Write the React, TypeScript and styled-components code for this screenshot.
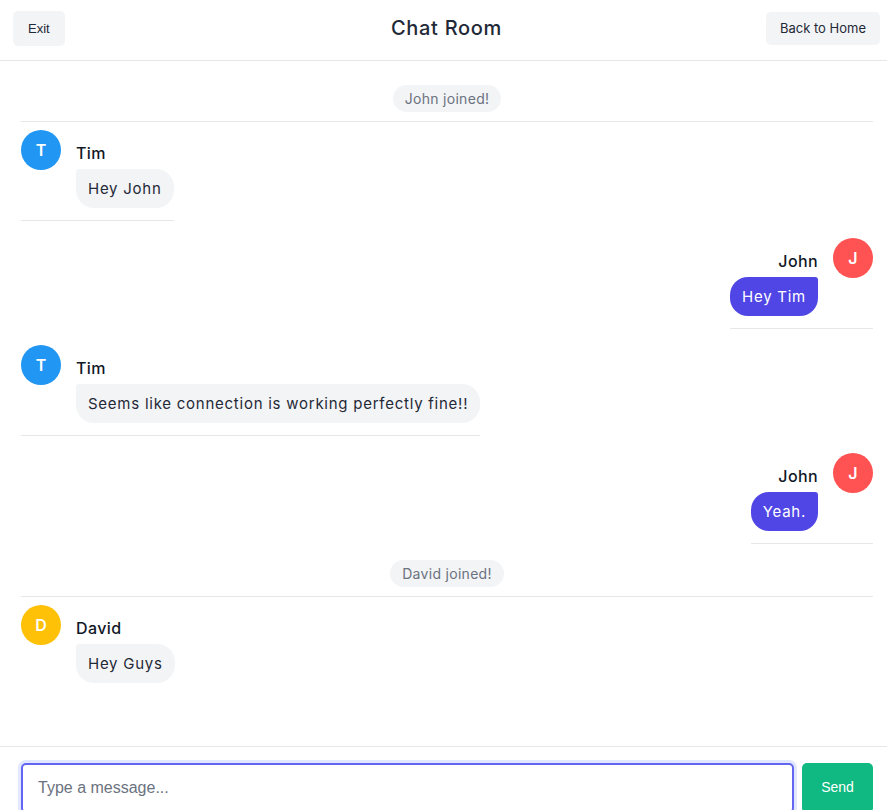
import React, { useEffect, useRef } from "react";
import styled, { createGlobalStyle } from "styled-components";

const Global = createGlobalStyle`
  html, body { margin: 0; padding: 0; background: #fff; overflow: hidden; }
  * { box-sizing: border-box; }
`;

const FONT = `"Inter", "Noto Sans", sans-serif`;

const Page = styled.div`
  height: 100vh;
  display: flex;
  flex-direction: column;
  font-family: ${FONT};
  color: #1f2937;
  overflow: hidden;
`;

const Header = styled.header`
  height: 61px;
  flex: none;
  display: grid;
  grid-template-columns: 1fr auto 1fr;
  align-items: center;
  padding: 0 7px 0 13px;
  border-bottom: 1px solid #e5e7eb;
`;

const HeaderButton = styled.button<{ $mono?: boolean; $align: "start" | "end" }>`
  justify-self: ${(p) => p.$align};
  border: none;
  background: #f3f4f6;
  border-radius: 5px;
  color: #1f2937;
  cursor: pointer;
  font-family: ${(p) => (p.$mono ? `"Liberation Sans", Arial, sans-serif` : FONT)};
  font-size: 13px;
  letter-spacing: 0;
  height: ${(p) => (p.$mono ? "35px" : "33px")};
  padding: 0 ${(p) => (p.$mono ? "15px" : "14px")};
  margin-top: ${(p) => (p.$mono ? "-3px" : "-4px")};
`;

const Title = styled.h1`
  margin: 0 0 4px;
  font-size: 20px;
  font-weight: 500;
  letter-spacing: 0.7px;
  color: #1f2937;
`;

const Messages = styled.main`
  height: 685px;
  flex: none;
  padding: 16px 14px 0 21px;
  display: flex;
  flex-direction: column;
  overflow: hidden;
`;

const SystemRow = styled.div`
  display: flex;
  justify-content: center;
  padding: 8px 0 9px;
  border-bottom: 1px solid #e5e7eb;
`;

const SystemPill = styled.span`
  background: #f3f4f6;
  color: #6b7280;
  font-size: 14px;
  line-height: 19px;
  letter-spacing: 0.3px;
  padding: 4px 12px;
  border-radius: 14px;
`;

const MessageRow = styled.div<{ $self: boolean }>`
  align-self: ${(p) => (p.$self ? "flex-end" : "flex-start")};
  display: flex;
  flex-direction: ${(p) => (p.$self ? "row-reverse" : "row")};
  align-items: flex-start;
  gap: 15px;
  padding: 7px 0 12px;
  margin-bottom: 8.5px;
  border-bottom: 1px solid #e5e7eb;
  &:last-child {
    border-bottom: none;
  }
`;

const Avatar = styled.div<{ $color: string }>`
  width: 40px;
  height: 40px;
  flex: none;
  border-radius: 50%;
  background: ${(p) => p.$color};
  color: #fff;
  display: flex;
  align-items: center;
  justify-content: center;
  font-size: 16px;
  font-weight: 600;
  margin-top: 1px;
`;

const Content = styled.div<{ $self: boolean }>`
  display: flex;
  flex-direction: column;
  align-items: ${(p) => (p.$self ? "flex-end" : "flex-start")};
  padding-top: 12px;
`;

const Name = styled.div`
  font-size: 16px;
  font-weight: 500;
  line-height: 24px;
  letter-spacing: 0.4px;
  color: #111827;
`;

const Bubble = styled.div<{ $self: boolean }>`
  margin-top: 4px;
  padding: 8px 12px;
  font-size: 15px;
  line-height: 23px;
  letter-spacing: 0.75px;
  background: ${(p) => (p.$self ? "#4f46e5" : "#f3f4f6")};
  color: ${(p) => (p.$self ? "#ffffff" : "#1f2937")};
  border-radius: ${(p) => (p.$self ? "18px 3px 18px 18px" : "3px 18px 18px 18px")};
`;

const Footer = styled.footer`
  flex: none;
  border-top: 1px solid #e5e7eb;
  padding: 16px 14px 16px 21px;
  display: flex;
  gap: 8px;
`;

const Input = styled.input`
  flex: 1;
  height: 50px;
  border: 2px solid #6366f1;
  border-radius: 5px;
  box-shadow: 0 0 0 3px #e0e7ff;
  outline: none;
  padding: 0 15px;
  font-family: "Liberation Sans", Arial, sans-serif;
  font-size: 16px;
  color: #111827;
  &::placeholder {
    color: #6b7280;
  }
`;

const SendButton = styled.button`
  flex: none;
  width: 71px;
  height: 50px;
  border: none;
  border-radius: 5px;
  background: #10b981;
  color: #fff;
  font-family: "Liberation Sans", Arial, sans-serif;
  font-size: 14px;
  padding-bottom: 3px;
`;

type Item =
  | { kind: "system"; text: string }
  | { kind: "msg"; name: string; text: string; color: string; self: boolean };

const items: Item[] = [
  { kind: "system", text: "John joined!" },
  { kind: "msg", name: "Tim", text: "Hey John", color: "#2196f3", self: false },
  { kind: "msg", name: "John", text: "Hey Tim", color: "#ff5252", self: true },
  { kind: "msg", name: "Tim", text: "Seems like connection is working perfectly fine!!", color: "#2196f3", self: false },
  { kind: "msg", name: "John", text: "Yeah.", color: "#ff5252", self: true },
  { kind: "system", text: "David joined!" },
  { kind: "msg", name: "David", text: "Hey Guys", color: "#ffc107", self: false },
];

export default function App() {
  const inputRef = useRef<HTMLInputElement>(null);
  useEffect(() => {
    inputRef.current?.focus({ preventScroll: true });
    window.scrollTo(0, 0);
  }, []);
  return (
    <Page>
      <Global />
      <Header>
        <HeaderButton $mono $align="start">Exit</HeaderButton>
        <Title>Chat Room</Title>
        <HeaderButton $align="end">Back to Home</HeaderButton>
      </Header>
      <Messages>
        {items.map((it, i) =>
          it.kind === "system" ? (
            <SystemRow key={i}>
              <SystemPill>{it.text}</SystemPill>
            </SystemRow>
          ) : (
            <MessageRow key={i} $self={it.self}>
              <Avatar $color={it.color}>{it.name[0]}</Avatar>
              <Content $self={it.self}>
                <Name>{it.name}</Name>
                <Bubble $self={it.self}>{it.text}</Bubble>
              </Content>
            </MessageRow>
          )
        )}
      </Messages>
      <Footer>
        <Input ref={inputRef} placeholder="Type a message..." />
        <SendButton>Send</SendButton>
      </Footer>
    </Page>
  );
}
